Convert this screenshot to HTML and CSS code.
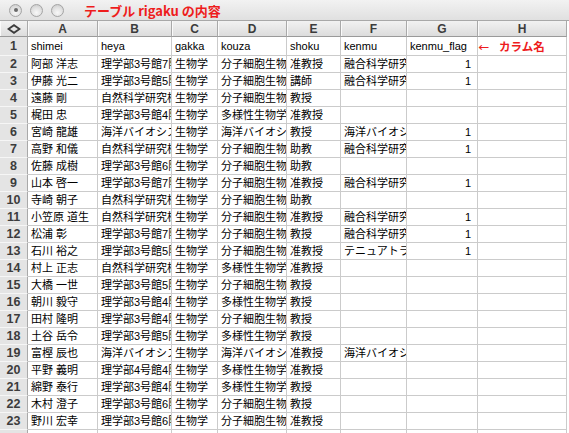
FILE: index.html
```html
<!DOCTYPE html>
<html lang="ja">
<head>
<meta charset="utf-8">
<title>テーブル rigaku の内容</title>
<link rel="stylesheet" href="styles.css">
</head>
<body>
<div class="window">
  <div class="titlebar">
    <div class="lights">
      <span class="light modified"></span>
      <span class="light"></span>
      <span class="light"></span>
    </div>
    <div class="title">テーブル rigaku の内容</div>
  </div>
  <div class="sheet">
    <div class="row head">
      <div class="corner"><svg width="14" height="10" viewBox="0 0 14 10"><path d="M1.5 5 L7 1.2 L12.5 5 L7 8.8 Z" fill="none" stroke="#3c3c3c" stroke-width="1.8" stroke-linejoin="miter"/></svg></div>
      <div class="col">A</div><div class="col">B</div><div class="col">C</div><div class="col">D</div>
      <div class="col">E</div><div class="col">F</div><div class="col">G</div><div class="col">H</div>
    </div>
    <div class="row first">
      <div class="num">1</div>
      <div class="cell">shimei</div><div class="cell">heya</div><div class="cell">gakka</div><div class="cell">kouza</div>
      <div class="cell">shoku</div><div class="cell">kenmu</div><div class="cell">kenmu_flag</div>
      <div class="cell note"><span class="arrow">←</span>カラム名</div>
    </div>
    <div class="row"><div class="num">2</div><div class="cell">阿部 洋志</div><div class="cell">理学部3号館7階</div><div class="cell">生物学</div><div class="cell">分子細胞生物学</div><div class="cell">准教授</div><div class="cell">融合科学研究科</div><div class="cell n">1</div><div class="cell"></div></div>
    <div class="row"><div class="num">3</div><div class="cell">伊藤 光二</div><div class="cell">理学部3号館5階</div><div class="cell">生物学</div><div class="cell">分子細胞生物学</div><div class="cell">講師</div><div class="cell">融合科学研究科</div><div class="cell n">1</div><div class="cell"></div></div>
    <div class="row"><div class="num">4</div><div class="cell">遠藤 剛</div><div class="cell">自然科学研究棟</div><div class="cell">生物学</div><div class="cell">分子細胞生物学</div><div class="cell">教授</div><div class="cell"></div><div class="cell"></div><div class="cell"></div></div>
    <div class="row"><div class="num">5</div><div class="cell">梶田 忠</div><div class="cell">理学部3号館4階</div><div class="cell">生物学</div><div class="cell">多様性生物学</div><div class="cell">准教授</div><div class="cell"></div><div class="cell"></div><div class="cell"></div></div>
    <div class="row"><div class="num">6</div><div class="cell">宮崎 龍雄</div><div class="cell">海洋バイオシステム</div><div class="cell">生物学</div><div class="cell">海洋バイオシステム</div><div class="cell">教授</div><div class="cell">海洋バイオシステム</div><div class="cell n">1</div><div class="cell"></div></div>
    <div class="row"><div class="num">7</div><div class="cell">高野 和儀</div><div class="cell">自然科学研究棟</div><div class="cell">生物学</div><div class="cell">分子細胞生物学</div><div class="cell">助教</div><div class="cell">融合科学研究科</div><div class="cell n">1</div><div class="cell"></div></div>
    <div class="row"><div class="num">8</div><div class="cell">佐藤 成樹</div><div class="cell">理学部3号館6階</div><div class="cell">生物学</div><div class="cell">分子細胞生物学</div><div class="cell">助教</div><div class="cell"></div><div class="cell"></div><div class="cell"></div></div>
    <div class="row"><div class="num">9</div><div class="cell">山本 啓一</div><div class="cell">理学部3号館7階</div><div class="cell">生物学</div><div class="cell">分子細胞生物学</div><div class="cell">准教授</div><div class="cell">融合科学研究科</div><div class="cell n">1</div><div class="cell"></div></div>
    <div class="row"><div class="num">10</div><div class="cell">寺崎 朝子</div><div class="cell">自然科学研究棟</div><div class="cell">生物学</div><div class="cell">分子細胞生物学</div><div class="cell">助教</div><div class="cell"></div><div class="cell"></div><div class="cell"></div></div>
    <div class="row"><div class="num">11</div><div class="cell">小笠原 道生</div><div class="cell">自然科学研究棟</div><div class="cell">生物学</div><div class="cell">分子細胞生物学</div><div class="cell">准教授</div><div class="cell">融合科学研究科</div><div class="cell n">1</div><div class="cell"></div></div>
    <div class="row"><div class="num">12</div><div class="cell">松浦 彰</div><div class="cell">理学部3号館7階</div><div class="cell">生物学</div><div class="cell">分子細胞生物学</div><div class="cell">教授</div><div class="cell">融合科学研究科</div><div class="cell n">1</div><div class="cell"></div></div>
    <div class="row"><div class="num">13</div><div class="cell">石川 裕之</div><div class="cell">理学部3号館5階</div><div class="cell">生物学</div><div class="cell">分子細胞生物学</div><div class="cell">准教授</div><div class="cell">テニュアトラック</div><div class="cell n">1</div><div class="cell"></div></div>
    <div class="row"><div class="num">14</div><div class="cell">村上 正志</div><div class="cell">自然科学研究棟</div><div class="cell">生物学</div><div class="cell">多様性生物学</div><div class="cell">准教授</div><div class="cell"></div><div class="cell"></div><div class="cell"></div></div>
    <div class="row"><div class="num">15</div><div class="cell">大橋 一世</div><div class="cell">理学部3号館5階</div><div class="cell">生物学</div><div class="cell">分子細胞生物学</div><div class="cell">教授</div><div class="cell"></div><div class="cell"></div><div class="cell"></div></div>
    <div class="row"><div class="num">16</div><div class="cell">朝川 毅守</div><div class="cell">理学部3号館4階</div><div class="cell">生物学</div><div class="cell">多様性生物学</div><div class="cell">教授</div><div class="cell"></div><div class="cell"></div><div class="cell"></div></div>
    <div class="row"><div class="num">17</div><div class="cell">田村 隆明</div><div class="cell">理学部3号館4階</div><div class="cell">生物学</div><div class="cell">分子細胞生物学</div><div class="cell">教授</div><div class="cell"></div><div class="cell"></div><div class="cell"></div></div>
    <div class="row"><div class="num">18</div><div class="cell">土谷 岳令</div><div class="cell">理学部3号館5階</div><div class="cell">生物学</div><div class="cell">多様性生物学</div><div class="cell">教授</div><div class="cell"></div><div class="cell"></div><div class="cell"></div></div>
    <div class="row"><div class="num">19</div><div class="cell">富樫 辰也</div><div class="cell">海洋バイオシステム</div><div class="cell">生物学</div><div class="cell">海洋バイオシステム</div><div class="cell">准教授</div><div class="cell">海洋バイオシステム</div><div class="cell"></div><div class="cell"></div></div>
    <div class="row"><div class="num">20</div><div class="cell">平野 義明</div><div class="cell">理学部4号館4階</div><div class="cell">生物学</div><div class="cell">多様性生物学</div><div class="cell">准教授</div><div class="cell"></div><div class="cell"></div><div class="cell"></div></div>
    <div class="row"><div class="num">21</div><div class="cell">綿野 泰行</div><div class="cell">理学部3号館4階</div><div class="cell">生物学</div><div class="cell">多様性生物学</div><div class="cell">教授</div><div class="cell"></div><div class="cell"></div><div class="cell"></div></div>
    <div class="row"><div class="num">22</div><div class="cell">木村 澄子</div><div class="cell">理学部3号館6階</div><div class="cell">生物学</div><div class="cell">分子細胞生物学</div><div class="cell">教授</div><div class="cell"></div><div class="cell"></div><div class="cell"></div></div>
    <div class="row"><div class="num">23</div><div class="cell">野川 宏幸</div><div class="cell">理学部3号館6階</div><div class="cell">生物学</div><div class="cell">分子細胞生物学</div><div class="cell">准教授</div><div class="cell"></div><div class="cell"></div><div class="cell"></div></div>
    <div class="row"><div class="num">24</div><div class="cell"></div><div class="cell"></div><div class="cell"></div><div class="cell"></div><div class="cell"></div><div class="cell"></div><div class="cell"></div><div class="cell"></div></div>
  </div>
</div>
</body>
</html>
```
FILE: styles.css
```css
html, body {
  margin: 0;
  padding: 0;
  background: #fff;
}

body {
  width: 569px;
  height: 433px;
  overflow: hidden;
  font-family: "Liberation Sans", "Noto Sans CJK JP", sans-serif;
}

.window {
  width: 569px;
}

/* window title bar with inactive traffic lights */
.titlebar {
  height: 21px;
  box-sizing: border-box;
  display: flex;
  align-items: center;
  padding-left: 9px;
  background: linear-gradient(#f2f2f2, #e0e0e0);
  border-bottom: 1px solid #a8a8a8;
}

.lights {
  display: flex;
  gap: 8px;
}

.light {
  width: 13px;
  height: 13px;
  box-sizing: border-box;
  border-radius: 50%;
  border: 1px solid #a4a4a4;
  background: radial-gradient(circle at 50% 70%, #f8f8f8 0%, #e0e0e0 55%, #c4c4c4 100%);
  display: flex;
  align-items: center;
  justify-content: center;
}

.light.modified::after {
  content: "";
  width: 4px;
  height: 4px;
  border-radius: 50%;
  background: #6a6a6a;
}

.title {
  margin-left: 20px;
  color: #ee1c1c;
  font-family: "Noto Sans CJK JP", sans-serif;
  font-weight: bold;
  font-size: 13px;
  line-height: 1;
}

/* spreadsheet grid */
.sheet {
  width: 569px;
}

.row {
  display: grid;
  grid-template-columns: 28px 70px 74px 46px 69px 54px 66px 71px 89px 2px;
  height: 17px;
}

.row.head {
  height: 16px;
}

.row.first {
  height: 19px;
}

.row > div {
  box-sizing: border-box;
  overflow: hidden;
  white-space: nowrap;
}

.corner,
.col {
  background: linear-gradient(#f2f2f2, #dcdcdc);
  border-right: 1px solid #a9a9a9;
  border-bottom: 1px solid #9a9a9a;
  box-shadow: inset 1px 0 0 #fafafa;
  display: flex;
  align-items: center;
  justify-content: center;
  color: #3c3c3c;
  font-weight: bold;
  font-size: 12px;
}

.num {
  background: #e4e4e4;
  border-right: 1px solid #a9a9a9;
  border-bottom: 1px solid #f6f6f6;
  display: flex;
  align-items: center;
  justify-content: center;
  color: #3c3c3c;
  font-weight: bold;
  font-size: 12.5px;
}

.cell {
  border-right: 1px solid #cbcbcb;
  border-bottom: 1px solid #cbcbcb;
  padding-left: 3px;
  font-size: 11px;
  line-height: 16px;
  color: #000;
}

.row.first .cell {
  line-height: 18px;
}

.cell.n {
  text-align: right;
  padding-right: 6px;
}

.cell.note {
  color: #ee1c1c;
  font-family: "Noto Sans CJK JP", sans-serif;
  font-weight: bold;
  font-size: 11.5px;
  padding-left: 1px;
}

.arrow {
  display: inline-block;
  font-weight: normal;
  font-family: "DejaVu Sans", sans-serif;
  font-size: 12px;
  transform: scaleX(1.1);
  margin-right: 10px;
}
```
